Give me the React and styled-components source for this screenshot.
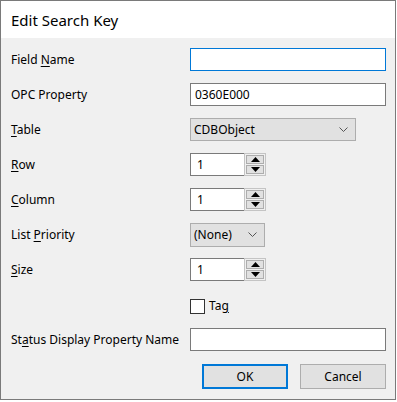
import styled, { createGlobalStyle } from 'styled-components';

const GlobalStyle = createGlobalStyle`
  html, body {
    margin: 0;
    padding: 0;
    background: #ffffff;
  }

  body {
    font-family: "Segoe UI", "Noto Sans", "Open Sans", sans-serif;
    font-size: 12px;
    color: #000000;
  }
`;

const Window = styled.div`
  width: 394px;
  height: 398px;
  border: 1px solid #7a7a7a;
  display: flex;
  flex-direction: column;
  background: #f0f0f0;
`;

const TitleBar = styled.div`
  height: 37px;
  display: flex;
  align-items: center;
  padding-left: 10px;
  background: #ffffff;
  font-size: 15px;
`;

const Body = styled.div`
  flex: 1;
  padding: 10px 8px 0 10px;
  display: flex;
  flex-direction: column;
`;

const Form = styled.div`
  display: grid;
  grid-template-columns: 179px 1fr;
  grid-auto-rows: 23px;
  row-gap: 12px;
  align-items: center;
`;

const Label = styled.label`
  line-height: 16px;
  white-space: nowrap;

  u {
    text-decoration: underline;
    text-underline-offset: 2px;
  }
`;

const Field = styled.div`
  display: flex;
  align-items: center;
  height: 100%;
`;

const TextInput = styled.input`
  box-sizing: border-box;
  width: ${(p) => p.$width || 196}px;
  height: 23px;
  margin: 0;
  padding: 0 4px;
  border: 1px solid ${(p) => (p.$focused ? '#0078d7' : '#7a7a7a')};
  background: #ffffff;
  font: inherit;
  color: #000000;
  outline: none;
`;

const Combo = styled.div`
  box-sizing: border-box;
  width: ${(p) => p.$width}px;
  height: ${(p) => p.$height || 23}px;
  display: flex;
  align-items: center;
  justify-content: space-between;
  padding: 0 7px 0 3px;
  border: 1px solid #adadad;
  background: #e1e1e1;
`;

const Spinner = styled.div`
  display: flex;
  height: 23px;
`;

const SpinInput = styled.div`
  box-sizing: border-box;
  width: 54px;
  height: 23px;
  display: flex;
  align-items: center;
  padding-left: 6px;
  border: 1px solid #7a7a7a;
  border-right: none;
  background: #ffffff;
`;

const SpinButtons = styled.div`
  box-sizing: border-box;
  width: 22px;
  height: 23px;
  display: flex;
  flex-direction: column;
  gap: 1px;
  padding: 1px;
  border: 1px solid #c4c4c4;
  background: #f0f0f0;
`;

const SpinButton = styled.div`
  flex: 1;
  display: flex;
  align-items: center;
  justify-content: center;
  border: 1px solid #adadad;
  background: #e1e1e1;
`;

const CheckRow = styled.div`
  display: flex;
  align-items: center;
  gap: 4px;
  margin-top: 3px;
`;

const CheckBox = styled.div`
  box-sizing: border-box;
  width: 15px;
  height: 15px;
  border: 1px solid #333333;
  background: #ffffff;
`;

const Buttons = styled.div`
  display: flex;
  justify-content: flex-end;
  gap: 12px;
  margin-top: 13px;
  padding-right: 1px;
`;

const Button = styled.button`
  box-sizing: border-box;
  width: 86px;
  height: 25px;
  margin: 0;
  padding: 0;
  border: ${(p) => (p.$default ? '2px solid #0078d7' : '1px solid #adadad')};
  background: #e1e1e1;
  font: inherit;
  color: #000000;
`;

function Chevron() {
  return (
    <svg width="9" height="5" viewBox="0 0 9 5">
      <path d="M0.5 0.5 L4.5 4.5 L8.5 0.5" fill="none" stroke="#555" strokeWidth="1" />
    </svg>
  );
}

function Triangle({ up }) {
  return (
    <svg width="9" height="5" viewBox="0 0 9 5">
      <path d={up ? 'M4.5 0 L9 5 L0 5 Z' : 'M0 0 L9 0 L4.5 5 Z'} fill="#000" />
    </svg>
  );
}

function SpinBox({ value }) {
  return (
    <Spinner>
      <SpinInput>{value}</SpinInput>
      <SpinButtons>
        <SpinButton><Triangle up /></SpinButton>
        <SpinButton><Triangle /></SpinButton>
      </SpinButtons>
    </Spinner>
  );
}

export default function App() {
  return (
    <>
      <GlobalStyle />
      <Window>
        <TitleBar>Edit Search Key</TitleBar>
        <Body>
          <Form>
            <Label>Field <u>N</u>ame</Label>
            <Field><TextInput $focused defaultValue="" /></Field>

            <Label>OPC Property</Label>
            <Field><TextInput defaultValue="0360E000" /></Field>

            <Label><u>T</u>able</Label>
            <Field>
              <Combo $width={166}>
                <span>CDBObject</span>
                <Chevron />
              </Combo>
            </Field>

            <Label><u>R</u>ow</Label>
            <Field><SpinBox value="1" /></Field>

            <Label><u>C</u>olumn</Label>
            <Field><SpinBox value="1" /></Field>

            <Label>List <u>P</u>riority</Label>
            <Field>
              <Combo $width={75} $height={24}>
                <span>(None)</span>
                <Chevron />
              </Combo>
            </Field>

            <Label><u>S</u>ize</Label>
            <Field><SpinBox value="1" /></Field>

            <span />
            <CheckRow>
              <CheckBox />
              <Label>Ta<u>g</u></Label>
            </CheckRow>

            <Label>St<u>a</u>tus Display Property Name</Label>
            <Field><TextInput defaultValue="" /></Field>
          </Form>
          <Buttons>
            <Button $default>OK</Button>
            <Button>Cancel</Button>
          </Buttons>
        </Body>
      </Window>
    </>
  );
}
